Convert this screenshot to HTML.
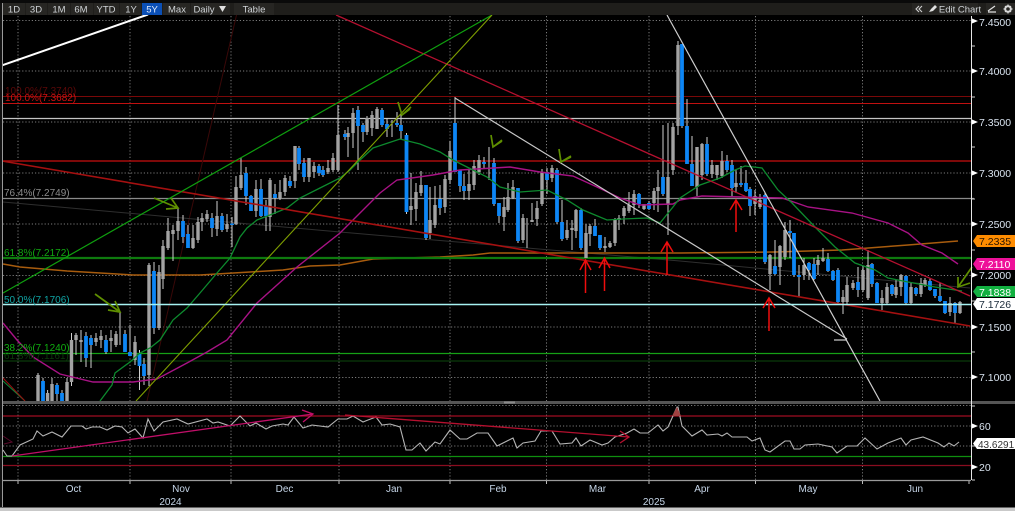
<!DOCTYPE html>
<html><head><meta charset="utf-8"><style>
html,body{margin:0;padding:0;background:#000;width:1015px;height:511px;overflow:hidden}
svg{display:block;font-family:"Liberation Sans",sans-serif;filter:blur(.35px)}
</style></head><body>
<svg width="1015" height="511" viewBox="0 0 1015 511" xmlns="http://www.w3.org/2000/svg">
<rect width="1015" height="511" fill="#000"/>
<!-- grid -->
<g stroke="#7a7a7a" stroke-width="1" stroke-dasharray="1.2 2" fill="none">
<path d="M18 16V401M130 16V401M231 16V401M339 16V401M450 16V401M546.5 16V401M649 16V401M755.5 16V401M862.5 16V401"/>
<path d="M18 405V480M130 405V480M231 405V480M339 405V480M450 405V480M546.5 405V480M649 405V480M755.5 405V480M862.5 405V480"/>
<path d="M3 20.5H971M3 71H971M3 122H971M3 173H971M3 224H971M3 275.5H971M3 327H971M3 377.5H971M3 405.5H971M3 426H971M3 446H971"/>
</g>
<!-- horizontal levels -->
<g fill="none">
<path d="M3 96.5H971" stroke="#7a0808"/>
<path d="M3 103.5H971" stroke="#c01010"/>
<path d="M3 118.5H971" stroke="#c4c4c4" stroke-width="1.2"/>
<path d="M3 161H971" stroke="#a80c0c" stroke-width="1.6"/>
<path d="M3 198.5H974" stroke="#8a8a8a" stroke-width="1.2"/>
<path d="M3 361H971" stroke="#0b3a0b" stroke-width="1.2"/>
<path d="M3 353.5H971" stroke="#16a016" stroke-width="1.2"/>
</g>
<!-- slow lines under -->
<g fill="none">
<path d="M236.500 15L147 401" stroke="#3a0808" stroke-width="1"/>
<path d="M3 202L340 232L680 261L970 288" stroke="#2e2e2e" stroke-width="1"/>
<path d="M3 264L20 267L67 271L133 275L200 275L250 272L283 270L310 266L340 265L373 259L440 257L473 255L490 253L573 253L680 253L775 252L842 250L908 245L958 241" stroke="#a85c0e" stroke-width="1.500"/>
<path d="M3 258H971" stroke="#0e7a0e" stroke-width="2.200"/>
</g>
<!-- candle wicks -->
<path fill="none" stroke="#cfcfcf" stroke-width="1" d="M38 373V401M43 378V401M47.600 390V401M52 378V401M57 383V401M62 390V401M67 378V401M71.500 333V386M76 333V355M81 330V362M86 332V367M91 335V368M96 333V346M101 330V348M106 335V354M111 330V352M116 331V347M120 312V345M125 330V352M130 325V356M135 336V365M139.500 350V390M144 358V385M149 263V386M154 262V334M159 265V330M163 240V289M168 218V250M173 225V261M178 207V240M183 215V243M188 225V248M193 225V249M198 217V243M202 213V231M207 210V222M212 213V237M217 201V236M222 213V232M227 214V232M232 217V247M236 176V225M241 158V190M246 167V205M251 195V211M256 180V217M261 179V217M266 200V231M270 178V231M275 184V214M280 180V200M285 175V196M290 176V188M295 146V188M299 146V170M304 158V182M309 158V182M314 162V178M319 164V176M323 166V177M328 160V174M333 153V172M338 105V172M345 130V140M348 127V157M353 108V148M358 106V170M363 123V142M367 116V135M372 111V136M377 107V129M382 108V127M387 118V137M392 120V137M397 112V127M401 113V139M406.500 133V214M411 173V225M416 183V221M421 171V196M426 185V240M430 187V239M435 186V228M440 185V215M445 175V213M450 141V184M455 97V172M460 170V192M464 174V200M469 170V200M474 160V190M479 155V175M484 157V168M489 147V180M494 158V206M499 203V223M504 197V231M508 183V212M513 180V199M518 188V243M523 214V243M527 218V248M532 203V222M537 201V226M542 169V206M547 168V194M552 165V182M557 168V224M562 200V241M567 220V240M572 220V250M576 209V238M581 208V250M586 224V258M590 224V246M595 219V236M600 235V250M605 237V252M610 241V248M615 218V246M619 215V230M624 206V224M629 192V213M634 190V215M639 193V208M644 204V210M649 201V210M654 188V210M658 170V212M663 125V196M668 123V235M673 123V175M678 41V135M682 44V128M687 99V164M692 136V186M697 147V196M702 143V180M707 137V176M712 160V178M717 165V180M722 151V178M727 155V172M732 160V196M736 170V193M741 166V187M746 170V192M750 187V216M755 190V215M760 194V209M765 193V264M770 254V290M775 240V275M780 245V285M785 222V260M790 220V258M794 233V277M799 265V297M804 258V280M809 262V280M814 258V280M818 255V275M823 248V262M828 253V272M833 270V281M838 268V303M843 290V314M847 277V304M853 280V290M858 267V297M863 266V292M868 250V300M872 263V287M877 282V303M882 290V310M887 283V305M892 284V296M896 280V298M901 274V296M906 275V304M911 282V304M916 287V296M921 278V297M925 278V287M930 278V291M935 289V298M940 283V302M945 301V314M950 297V316M955 302V323M960 301V314"/>
<!-- gray bodies -->
<path fill="none" stroke="#a3a3a3" stroke-width="3.400" d="M38 375V401M47.600 393V401M52 384V401M67 382V401M71.500 340V382M76 335V340M81 340V342M96 338V342M101 336V340M111 338V341M116 334V345M135 342V360M149 265V375M159 272V328M163 246V279M168 231V248M173 230V234M178 221V231M193 238V248M198 222V240M202 218V222M207 214V219M217 216V229M227 224V229M236 187V224M241 175V188M256 189V211M270 180V217M280 192V198M285 178V192M295 146V181M309 158V177M314 166V172M328 168V172M333 158V170M338 135V170M348 133V137M353 113V133M367 118V132M372 115V128M377 109V129M411 206V210M416 192V209M421 185V193M430 220V233M435 205V225M445 179V207M450 151V180M469 184V191M474 166V185M479 160V172M504 207V217M508 197V210M513 187V198M523 218V240M532 220V222M537 208V219M542 172V204M552 168V178M567 230V238M572 228V230M576 210V231M586 233V258M590 226V234M605 246V248M610 243V247M615 220V243M619 218V220M624 208V216M629 205V211M634 194V205M644 204V209M654 191V203M658 187V191M668 177V205M673 127V170M678 45V126M697 147V187M702 144V175M712 165V174M717 165V175M722 161V176M736 183V187M755 196V204M760 200V207M770 255V274M780 246V267M785 230V257M804 265V275M818 260V265M823 258V261M843 297V302M847 285V302M853 283V288M863 270V290M868 265V298M882 298V303M887 287V303M896 287V295M901 275V287M911 287V303M921 283V294M925 280V285M950 303V312M960 302V313"/>
<!-- blue bodies -->
<path fill="none" stroke="#0d86f5" stroke-width="3.800" d="M43 381V401M57 385V394M62 393V401M86 336V358M91 338V345M106 340V352M125 334V352M130 352V356M139.500 354V366M144 364V376M154 271V328M183 221V237M188 234V248M212 218V228M222 216V230M232 223.500V225M246 173V196M251 196V211M261 189V216M266 206V216M275 194V198M290 181V186M299 148V164M304 163V177M319 166V173M323 170V175M345 134V137M358 110V126M363 125V132M382 110V125M387 124V129M397 123V125M401 125V131M406.500 135V212M426 185V238M440 199V208M455 123V172M460 170V186M464 186V191M484 162V164M494 163V204M499 203V216M518 188V241M547 172V180M557 170V222M562 222V239M581 210V248M595 226V236M600 235V248M639 194V204M649 203V209M663 177V194M682 44V126M687 126V164M692 164V186M707 144V174M727 161V170M732 165V188M741 183V185M746 183V191M750 189V206M765 195V262M775 266V274M790 231V233M794 233V275M799 275V277M809 263V270M814 264V279M828 259V271M833 271V280M838 270V302M858 282V290M872 264V284M877 283V303M892 285V294M906 276V303M916 288V294M930 281V290M935 289V296M940 296V301M945 301V313M955 303V313"/>
<!-- moving averages -->
<g fill="none">
<path d="M3 323L17 340L33 357L60 374L93 382L133 382L157 379L187 363L207 352L227 340L257 303L297 267L340 233L360 213L380 193L397 180L433 175L460 170L510 167L540 172L573 176L597 187L620 198L640 205L673 204L680 200L702 196L742 197L782 198L808 207L852 213L888 223L908 233L922 245L942 253L958 264" stroke="#a81285" stroke-width="1.400"/>
<path d="M100 401L112 385L115 373L130 362L140 353L150 348L160 340L173 320L187 308L200 293L217 273L230 258L240 237L247 228L257 220L270 215L287 208L300 198L320 188L340 178L350 170L360 160L373 148L400 139L420 144L440 152L453 160L473 170L487 177L500 187L520 192L547 190L567 200L583 210L607 220L623 219L647 218L660 223L673 207L680 198L700 185L720 178L735 170L745 166L762 168L778 190L792 203L815 227L835 247L855 263L875 270L888 278L908 282L935 287L962 291" stroke="#0d8a2e" stroke-width="1.300"/>
<!-- trend lines -->
<path d="M0 66L148 14.500" stroke="#fff" stroke-width="2"/>
<path d="M336 15L970 296" stroke="#b5102f" stroke-width="1.300"/>
<path d="M2 161L970 326" stroke="#a51010" stroke-width="1.600"/>
<path d="M3 293L492 15" stroke="#0fa00f" stroke-width="1.200"/>
<path d="M136 401L492 15" stroke="#7f9f00" stroke-width="1.100"/>
<path d="M3 381L25 401" stroke="#0f8a3a" stroke-width="1"/>
<path d="M3 378L25 401" stroke="#9a1010" stroke-width="1"/>
<path d="M455 98L847 339M834 340H847" stroke="#c8c8c8" stroke-width="1.200"/>
<path d="M667 15L880 401" stroke="#cfcfcf" stroke-width="1.200"/>
<path d="M3 304.500H971" stroke="#a6f2f2" stroke-width="1.600"/>
<!-- green arrows -->
<g stroke="#5f8f00" stroke-width="1.700">
<path d="M95 294L120 312M108 310L120 312L115 301"/>
<path d="M154 198L178 208M166 209L178 208L171 198"/>
<path d="M411 107L402 115M398 102L402 115L410 109"/>
<path d="M502 140L493 147M491 135L493 147L502 141"/>
<path d="M571 156L561 162M559 149L561 162L571 157"/>
<path d="M972 267L958 287M958 277L958 287L970 283"/>
</g>
<!-- red up arrows -->
<g stroke="#f00d0d" stroke-width="1.500">
<path d="M585.500 293V260M580 270L585.500 260L591 270"/>
<path d="M604.500 291V258M599 268L604.500 258L610 268"/>
<path d="M667 275V242M661 252L667 242L673 252"/>
<path d="M736 232V200M730 210L736 200L742 210"/>
<path d="M769 331V298M763 308L769 298L775 308"/>
</g>
</g>
<!-- fib labels -->
<g font-size="10">
<text x="5" y="94" fill="#5c0808">100.0%(7.3740)</text>
<text x="5" y="101" fill="#d01010">100.0%(7.3682)</text>
<text x="4" y="196" fill="#8c8c8c">76.4%(7.2749)</text>
<text x="4" y="256" fill="#10a810">61.8%(7.2172)</text>
<text x="4" y="303" fill="#0fa5a5">50.0%(7.1706)</text>
<text x="4" y="351" fill="#10b010">38.2%(7.1240)</text>
<text x="4" y="359" fill="#0a3c0a">61.8%(7.1161)</text>
</g>
<!-- separator -->
<rect x="0" y="401" width="1015" height="3" fill="#555"/>
<rect x="504" y="401.500" width="11" height="2" fill="#8a8a8a"/>
<!-- RSI -->
<g fill="none">
<path d="M3 416H971" stroke="#a00d22" stroke-width="1.200"/>
<path d="M3 456.500H971" stroke="#0f8f0f" stroke-width="1.300"/>
<path d="M3 465.500H971" stroke="#8a0d20" stroke-width="1.200"/>
<path d="M3 450L7 456L12 456L20 445L33 439L37 431L43 436L52 432L62 437L71 426L82 426L86 429L92 427L100 427L107 430L115 426L122 427L128 433L135 429L143 438L148 419L154 431L163 422L177 419L188 424L207 419L213 423L218 422L230 426L240 416L250 426L256 423L266 429L272 426L283 424L288 425L294 417L303 428L312 425L328 427L338 419L347 419L353 416L363 422L368 420L376 417L382 425L390 424L400 427L406 450L412 450L420 443L426 451L435 442L440 444L450 430L460 439L467 439L477 433L488 433L497 446L513 438L517 448L523 443L535 441L541 431L552 431L560 444L572 443L576 438L581 446L590 440L602 445L608 443L615 437L627 433L634 429L640 433L648 433L658 425L663 431L668 427L677 407L678 407L682 426L692 436L702 430L707 435L718 434L722 436L727 433L732 437L747 437L752 441L760 438L765 450L770 452L785 441L790 441L794 449L800 449L805 445L818 444L832 447L837 453L847 446L857 446L865 438L877 449L888 443L901 438L906 445L911 440L923 437L938 443L944 447L949 443L954 446L959 442" stroke="#b5b5b5" stroke-width="1.100"/>
<path d="M12 456L313 414M302 410L313 414L303 422" stroke="#c00f68" stroke-width="1.300"/>
<path d="M345 415L629 437M620 431L629 437L620 443" stroke="#b5102f" stroke-width="1.300"/>
<path d="M3 436L12 442L4 444" stroke="#5a0a2a" stroke-width="1"/>
<path d="M672 416L677 407L681 416Z" fill="#a04040" stroke="none"/>
</g>
<!-- bottom axis -->
<path d="M3 480.500H971" stroke="#9a9a9a" stroke-width="1.200"/>
<path d="M18 481V484M130 481V484M231 481V484M339 481V484M450 481V484M546.500 481V484M649 481V484M755.500 481V484M862.500 481V484M969 481V484" stroke="#bbb"/>
<g font-size="10" fill="#c6d6e8" text-anchor="middle">
<text x="73.500" y="492">Oct</text><text x="181" y="492">Nov</text><text x="284.500" y="492">Dec</text>
<text x="394" y="492">Jan</text><text x="498" y="492">Feb</text><text x="597.500" y="492">Mar</text>
<text x="702" y="492">Apr</text><text x="808" y="492">May</text><text x="915" y="492">Jun</text>
<text x="170.500" y="505">2024</text><text x="654" y="505">2025</text>
</g>
<!-- edges -->
<rect x="0" y="0" width="2" height="511" fill="#111"/>
<rect x="2" y="2" width="1" height="505" fill="#9a9a9a"/>
<rect x="0" y="507.500" width="1015" height="3.500" fill="#c9c9c9"/>
<!-- right axis -->
<path d="M971.500 16V480" stroke="#e6e6e6" stroke-width="1"/>
<g fill="#fff">
<path d="M972 18.500L978 21L972 23.500ZM972 68.500L978 71L972 73.500ZM972 119.500L978 122L972 124.500ZM972 170.500L978 173L972 175.500ZM972 221.500L978 224L972 226.500ZM972 272.500L978 275L972 277.500ZM972 324.500L978 327L972 329.500ZM972 374.500L978 377L972 379.500ZM972 423.500L978 426L972 428.500ZM972 464.500L978 467L972 469.500Z"/>
</g>
<path d="M972 46H975M972 97H975M972 147H975M972 199H975M972 250H975M972 301H975M972 352H975M972 406H975M972 446H975M972 480H975" stroke="#ccc"/>
<g font-size="10.500" fill="#d8e2ee">
<text x="979" y="26">7.4500</text><text x="979" y="75">7.4000</text><text x="979" y="126">7.3500</text>
<text x="979" y="177">7.3000</text><text x="979" y="228">7.2500</text><text x="979" y="279">7.2000</text>
<text x="979" y="331">7.1500</text><text x="979" y="381">7.1000</text>
<text x="979" y="430">60</text><text x="979" y="471">20</text>
</g>
<!-- tags -->
<path d="M973 241L977 235H1015V247H977Z" fill="#ff8c00"/>
<text x="979" y="245" font-size="10.500" fill="#2a1500">7.2335</text>
<path d="M973 264L977 258H1015V270H977Z" fill="#ee1199"/>
<text x="979" y="268" font-size="10.500" fill="#fff">7.2110</text>
<path d="M973 291.500L977 286H1015V297H977Z" fill="#12b040"/>
<text x="979" y="296" font-size="10.500" fill="#fff">7.1838</text>
<path d="M973 304L977 298H1015V310H977Z" fill="#fff"/>
<text x="979" y="308" font-size="10.500" fill="#1a2a3a">7.1726</text>
<path d="M973 443.500L977 438H1015V449H977Z" fill="#fff"/>
<text x="978" y="448" font-size="10" fill="#333">43.6291</text>
<!-- toolbar -->
<rect x="0" y="0" width="1015" height="3" fill="#0a0a0a"/>
<rect x="3" y="3" width="1012" height="12" fill="#1f1e1b"/>
<g fill="#272623">
<rect x="3" y="3" width="22" height="12"/><rect x="26" y="3" width="21" height="12"/><rect x="48" y="3" width="22" height="12"/>
<rect x="71" y="3" width="22" height="12"/><rect x="94" y="3" width="25" height="12"/><rect x="120" y="3" width="21" height="12"/>
<rect x="163" y="3" width="27" height="12"/><rect x="191" y="3" width="39" height="12"/><rect x="234" y="3" width="40" height="12"/>
<rect x="912" y="3" width="66" height="12"/><rect x="986" y="3" width="29" height="12"/>
</g>
<rect x="142" y="3" width="20" height="12" fill="#0b4fb5"/>
<g font-size="9.500" fill="#cfd3d6" text-anchor="middle">
<text x="14" y="12.500">1D</text><text x="36" y="12.500">3D</text><text x="59" y="12.500">1M</text><text x="81" y="12.500">6M</text>
<text x="106" y="12.500">YTD</text><text x="131" y="12.500">1Y</text><text x="152" y="12.500" fill="#e6eefc">5Y</text><text x="177" y="12.500">Max</text>
<text x="204" y="12.500">Daily</text><text x="254" y="12.500">Table</text>
<text x="960" y="12.500">Edit Chart</text>
</g>
<path d="M219 6H226L222.500 12Z" fill="#e0e0e0"/>
<path d="M919 6L916 9L919 12M922 6L919 9L922 12" fill="none" stroke="#cfcfcf" stroke-width="1.100"/>
<path d="M929 12L931 9L935 5L937 7L933 11Z" fill="#e0e0e0"/>
<path d="M988 12H996M988 11L995 6" fill="none" stroke="#e0e0e0" stroke-width="1.200"/>
<circle cx="1008" cy="9" r="2.800" fill="none" stroke="#d8d8d8" stroke-width="2"/>
<path d="M1008 4.500V6M1008 12V13.500M1003.500 9H1005M1011 9H1012.500M1005 6L1006 7M1010 11L1011 12M1011 6L1010 7M1006 11L1005 12" stroke="#d8d8d8" stroke-width="1.200"/>
</svg>
</body></html>
